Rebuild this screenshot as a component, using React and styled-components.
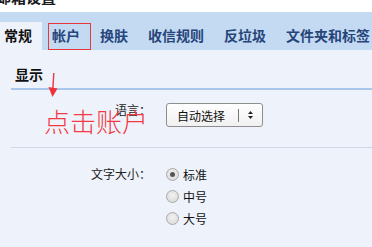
import styled, { createGlobalStyle } from 'styled-components';

const GlobalStyle = createGlobalStyle`
  html, body {
    margin: 0;
    padding: 0;
    background: #eef3fb;
    overflow: hidden;
  }
  body {
    font-family: "Noto Sans CJK SC", "Noto Sans", sans-serif;
    color: #111;
  }
`;

const tabs = ['常规', '帐户', '换肤', '收信规则', '反垃圾', '文件夹和标签'];
const sizes = [
  { label: '标准', checked: true },
  { label: '中号', checked: false },
  { label: '大号', checked: false },
];

export default function App () {
  return (
    <Page>
      <GlobalStyle />
      <TitleStrip>
        <Title>邮箱设置</Title>
      </TitleStrip>
      <TabBar>
        {tabs.map((t, i) => (
          <Tab key={t} $active={i === 0}>
            {t}
            {i === 1 && <MarkBox />}
          </Tab>
        ))}
      </TabBar>
      <Panel>
        <SectionHead>显示</SectionHead>
        <Row>
          <Label $shift={-4}>语言：</Label>
          <Select>
            <SelectText>自动选择</SelectText>
            <Divider />
            <svg width='7' height='10' viewBox='0 0 7 10'>
              <path d='M3.5 1 L6 4 H1 Z' fill='#222' />
              <path d='M3.5 9 L6 6 H1 Z' fill='#222' />
            </svg>
          </Select>
          <Hint>点击账户</Hint>
        </Row>
        <Row $top={15}>
          <Label>文字大小：</Label>
          <RadioList>
            {sizes.map(s => (
              <RadioItem key={s.label}>
                <Radio $checked={s.checked} />
                {s.label}
              </RadioItem>
            ))}
          </RadioList>
        </Row>
      </Panel>
      <Arrow width='14' height='28' viewBox='0 0 14 28'>
        <path d='M7.8 1 L6.8 18' stroke='#f0323c' strokeWidth='1.4' fill='none' />
        <path d='M2.5 15 L11.5 16.5 L6.5 25 Z' fill='#f0323c' />
      </Arrow>
    </Page>
  );
}

const Page = styled.div`
  position: relative;
  width: 372px;
  height: 247px;
  overflow: hidden;
`;
const TitleStrip = styled.div`
  height: 12px;
  background: #fff;
  overflow: hidden;
`;
const Title = styled.div`
  margin: -11px 0 0 -4px;
  font-size: 15px;
  line-height: 16px;
  font-weight: 700;
  color: #1a1a1a;
`;
const TabBar = styled.div`
  height: 38px;
  background: #c4daf2;
  display: flex;
  align-items: flex-end;
  margin-right: -6px;
  & > div:first-child {
    margin-left: -6px;
  }
`;
const Tab = styled.div`
  position: relative;
  height: 28px;
  line-height: 27px;
  padding: 0 10px;
  font-size: 14px;
  font-weight: 700;
  white-space: nowrap;
  color: ${props => props.$active ? '#111' : '#26457a'};
  background: ${props => props.$active ? '#eef3fb' : 'transparent'};
`;
const MarkBox = styled.span`
  position: absolute;
  left: 6px;
  right: -1px;
  top: 1px;
  bottom: 0;
  border: 1px solid #e8383d;
`;
const Panel = styled.div`
  margin-left: 11px;
`;
const SectionHead = styled.div`
  padding: 14px 0 4px 4px;
  font-size: 14px;
  line-height: 20px;
  font-weight: 700;
  border-bottom: 2px solid #a9c7ea;
`;
const Row = styled.div`
  position: relative;
  display: grid;
  grid-template-columns: 140px 1fr;
  column-gap: 15px;
  align-items: start;
  padding: ${props => props.$top ?? 13}px 0 20px;
  border-bottom: 1px solid #cfd8e6;
`;
const Label = styled.div`
  text-align: right;
  font-size: 12px;
  line-height: 22px;
  color: #222;
  margin-top: ${props => props.$shift ?? 0}px;
`;
const Select = styled.div`
  width: 97px;
  height: 24px;
  box-sizing: border-box;
  border: 1px solid #8e8e8e;
  border-radius: 3px;
  background: linear-gradient(#ffffff, #f0f0f0);
  display: flex;
  align-items: center;
  padding: 0 8px 0 10px;
  font-size: 12px;
  color: #111;
`;
const SelectText = styled.span`
  flex: 1;
`;
const Divider = styled.span`
  width: 1px;
  height: 13px;
  background: #777;
  margin-right: 8px;
`;
const Hint = styled.div`
  position: absolute;
  left: 33px;
  top: 16px;
  font-size: 26px;
  line-height: 30px;
  font-weight: 300;
  color: #f23a44;
  white-space: nowrap;
`;
const RadioList = styled.div`
  display: flex;
  flex-direction: column;
`;
const RadioItem = styled.label`
  display: flex;
  align-items: center;
  gap: 4px;
  height: 22px;
  font-size: 12px;
  color: #111;
`;
const Radio = styled.span`
  position: relative;
  width: 13px;
  height: 13px;
  box-sizing: border-box;
  border-radius: 50%;
  border: 1px solid #a9a9a9;
  background: radial-gradient(circle at 50% 40%, #f2f2f2, #d6d6d6);
  &::after {
    content: '';
    display: ${props => props.$checked ? 'block' : 'none'};
    position: absolute;
    left: 3px;
    top: 3px;
    width: 5px;
    height: 5px;
    border-radius: 50%;
    background: #555;
  }
`;
const Arrow = styled.svg`
  position: absolute;
  left: 46px;
  top: 72px;
`;
